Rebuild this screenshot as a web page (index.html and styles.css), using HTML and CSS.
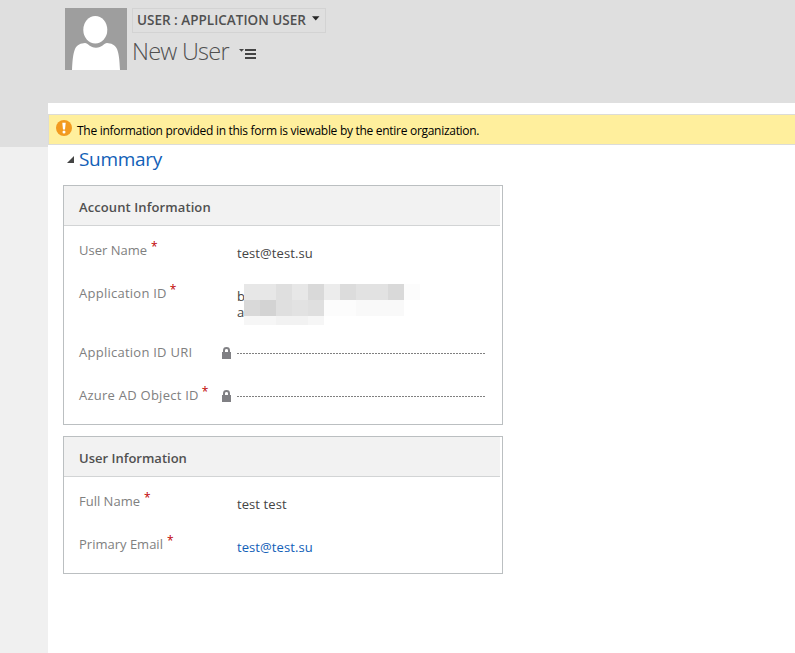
FILE: index.html
```html
<!DOCTYPE html>
<html lang="en">
<head>
<meta charset="utf-8">
<title>New User</title>
<link rel="stylesheet" href="styles.css">
</head>
<body>
<div class="page">
  <header class="header">
    <svg class="avatar" viewBox="0 0 62 62"><rect width="62" height="62" fill="#9e9e9e"/><ellipse cx="30.3" cy="21.700" rx="12" ry="13.800" fill="#fff"/><path d="M7 62C7.500 52 8 46 10 41C12 36.500 16 35.200 20 35C23 35 25 39.800 31 39.800C37 39.800 39 35 42 35C46 35.200 50 36.500 52 41C54 46 54.500 52 55 62Z" fill="#fff"/></svg>
    <div class="titles">
      <div class="form-picker"><span>USER : APPLICATION USER</span><svg width="8" height="5" viewBox="0 0 8 5"><path d="M0 .3H7.500L3.750 4.500Z" fill="#262626"/></svg></div>
      <div class="record"><h1>New User</h1><svg width="18" height="11" viewBox="0 0 18 11"><path d="M0 1H5L2.500 3.800Z" fill="#444"/><path d="M6 1H17V3H6ZM6 5H17V7H6ZM6 9H17V11H6Z" fill="#444"/></svg></div>
    </div>
  </header>
  <div class="main">
    <aside class="gutter"></aside>
    <main class="content">
      <div class="notice">
        <svg width="16" height="16" viewBox="0 0 16 16"><circle cx="8" cy="8" r="8" fill="#f29a1f"/><path d="M6.300 2.700H9.700L9 9.500H7Z" fill="#fff"/><circle cx="8" cy="12" r="1.500" fill="#fff"/></svg>
        <span>The information provided in this form is viewable by the entire organization.</span>
      </div>
      <div class="section-title"><svg width="7" height="7" viewBox="0 0 7 7"><path d="M7 0V7H0Z" fill="#444"/></svg><h2>Summary</h2></div>
      <section class="panel">
        <h3 class="account">Account Information</h3>
        <div class="rows">
          <div class="row"><div class="label">User Name<b>*</b></div><div class="value">test@test.su</div></div>
          <div class="row tall"><div class="label wide">Application ID<b>*</b></div><div class="value">b<br>a
            <svg class="mask" width="176" height="41" viewBox="0 0 176 41" shape-rendering="crispEdges">
              <path fill="#e7e7e7" d="M0 0H32V16H0ZM48 0H64V16H48Z"/><path fill="#dfdfdf" d="M32 0H48V16H32ZM32 16H48V32H32ZM64 16H80V32H64Z"/><path fill="#d9d9d9" d="M64 0H80V16H64ZM144 0H160V16H144ZM0 16H16V32H0Z"/><path fill="#ececec" d="M80 0H96V16H80Z"/><path fill="#dcdcdc" d="M96 0H112V16H96Z"/><path fill="#e2e2e2" d="M112 0H144V16H112ZM48 16H64V32H48Z"/><path fill="#d3d3d3" d="M16 16H32V32H16Z"/><path fill="#fcfcfc" d="M160 0H176V16H160ZM80 16H112V32H80Z"/><path fill="#f9f9f9" d="M112 16H160V32H112Z"/><path fill="#f6f6f6" d="M0 32H32V41H0ZM64 32H80V41H64Z"/><path fill="#f2f2f2" d="M32 32H64V41H32Z"/>
            </svg></div></div>
          <div class="row"><div class="label wide">Application ID URI</div><svg class="lock" width="9" height="12" viewBox="0 0 9 12"><path d="M2 6V3.500C2 .2 7 .2 7 3.500V6" fill="none" stroke="#808084" stroke-width="2"/><path d="M0 5H9V12H0Z" fill="#808084"/></svg><div class="blank"></div></div>
          <div class="row"><div class="label wide">Azure AD Object ID<b>*</b></div><svg class="lock" width="9" height="12" viewBox="0 0 9 12"><path d="M2 6V3.500C2 .2 7 .2 7 3.500V6" fill="none" stroke="#808084" stroke-width="2"/><path d="M0 5H9V12H0Z" fill="#808084"/></svg><div class="blank"></div></div>
        </div>
      </section>
      <section class="panel">
        <h3>User Information</h3>
        <div class="rows">
          <div class="row"><div class="label">Full Name<b>*</b></div><div class="value">test test</div></div>
          <div class="row"><div class="label">Primary Email<b>*</b></div><div class="value link">test@test.su</div></div>
        </div>
      </section>
    </main>
  </div>
</div>
</body>
</html>
```
FILE: styles.css
```css
* { box-sizing: border-box; }
body { margin: 0; background: #fff; font-family: "Open Sans", "Noto Sans", sans-serif; color: #444; }
h1, h2, h3 { margin: 0; }
svg { display: block; flex: none; }
.page { height: 653px; overflow: hidden; }
.header { height: 103px; background: #dfdfdf; display: flex; gap: 5px; padding: 8px 0 0 65px; }
.avatar { width: 62px; height: 62px; }
.form-picker { width: 194px; height: 25px; border: 1px solid #d3d3d3; display: flex; padding: 0 0 0 4px; font-size: 13.5px; font-weight: 600; line-height: 22px; color: #505050; white-space: nowrap; }
.form-picker span { width: 175px; }
.form-picker svg { margin-top: 7px; }
.record { display: flex; }
.record h1 { width: 107px; font-size: 23.5px; font-weight: 300; letter-spacing: -0.75px; line-height: 37px; color: #505050; white-space: nowrap; }
.record svg { margin-top: 15px; }
.main { display: flex; height: 550px; }
.gutter { width: 48px; background: linear-gradient(#dfdfdf 44px, #f0f0f0 44px); }
.content { flex: 1; padding-top: 11px; }
.notice { height: 31px; border: 1px solid #dcdcd8; border-right: 0; background: #ffef9d; display: flex; gap: 5px; padding: 5px 0 0 7px; font-size: 12px; letter-spacing: -0.29px; line-height: 22px; color: #000; white-space: nowrap; }
.section-title { display: flex; gap: 5px; height: 40px; padding-left: 19px; }
.section-title svg { margin-top: 11px; }
.section-title h2 { font-size: 19px; font-weight: 400; letter-spacing: -0.3px; line-height: 28px; color: #1160b7; }
.panel { width: 440px; margin: 0 0 11px 15px; border: 1px solid #bbbfc1; }
.panel h3 { width: 436px; height: 40px; background: #f2f2f2; border-bottom: 1px solid #d2d4d5; padding-left: 15px; font-size: 13px; font-weight: 600; line-height: 42px; color: #505050; }
.panel .account { letter-spacing: 0.1px; }
.rows { padding: 3px 15px 7px; }
.row { display: flex; height: 43px; font-size: 13px; }
.row.tall { height: 59px; }
.label { width: 143px; height: 42px; line-height: 42px; color: #808080; white-space: nowrap; }
.label.wide { letter-spacing: 0.25px; }
.label b { margin-left: 4px; font-size: 12px; line-height: 1; font-weight: 400; color: #c00000; position: relative; top: -4px; }
.label.wide b { margin-left: 3px; }
.value { position: relative; margin-left: 15px; padding-top: 16px; line-height: 16px; letter-spacing: 0.08px; }
.link { color: #1160b7; }
.mask { position: absolute; left: 7px; top: 12px; }
.lock { margin-top: 16px; }
.blank { width: 248px; height: 1px; margin: 22px 0 0 6px; background: repeating-linear-gradient(90deg, #808080 0 2px, transparent 2px 3px); }
```
